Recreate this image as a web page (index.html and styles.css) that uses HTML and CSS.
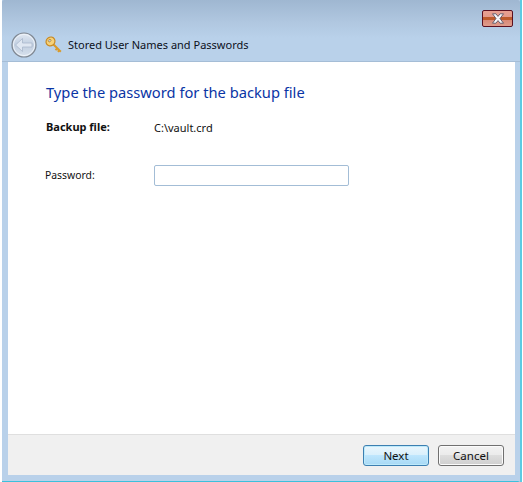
FILE: index.html
```html
<!DOCTYPE html>
<html lang="en">
<head>
<meta charset="utf-8">
<title>Stored User Names and Passwords</title>
<link rel="stylesheet" href="styles.css">
</head>
<body>
<div class="window">
  <div class="chrome">
    <div class="caption">
      <button class="close" aria-label="Close">
        <svg width="14" height="11" viewBox="0 0 14 11"><path d="M1.500 .8h3.400L7 3.400 9.100 .8h3.400L9 5.500l3.500 4.700H9.100L7 7.600 4.900 10.200H1.500L5 5.500z" fill="#f6f6fa" stroke="#4a4a5e" stroke-width=".8"/></svg>
      </button>
    </div>
    <div class="nav">
      <svg class="back" width="26" height="26" viewBox="0 0 26 26">
        <defs>
          <linearGradient id="bk" x1="0" y1="0" x2="0" y2="1"><stop offset="0" stop-color="#e2e9f3"/><stop offset=".5" stop-color="#c0cee0"/><stop offset="1" stop-color="#d9e2ed"/></linearGradient>
        </defs>
        <circle cx="13" cy="13" r="12" fill="url(#bk)" stroke="#7f8791" stroke-width="1.200"/>
        <circle cx="13" cy="13" r="10.600" fill="none" stroke="#eef3f9" stroke-width="1"/>
        <path d="M4.500 13l7-6.500V11h9.500v4H11.500v4.500z" fill="#dfe7f2" stroke="#a9b8cb" stroke-width=".8"/>
      </svg>
      <svg class="key" width="18" height="18" viewBox="0 0 18 18">
        <path d="M7.500 7.500l8.300 8.300M12.300 12.300l-1.800 1.800M14.300 14.300l-1.500 1.500" fill="none" stroke="#d99a2b" stroke-width="2"/>
        <ellipse cx="5.500" cy="5.500" rx="4.600" ry="4.200" transform="rotate(-35 5.500 5.500)" fill="#f6d27a" stroke="#c98a22" stroke-width="1.200"/>
        <ellipse cx="4.600" cy="4.600" rx="1.500" ry="1.200" transform="rotate(-35 4.600 4.600)" fill="#b9cbe3" stroke="#b8801f" stroke-width=".7"/>
      </svg>
      <span class="nav-title">Stored User Names and Passwords</span>
    </div>
  </div>
  <div class="client">
    <main class="content">
      <h1 class="heading">Type the password for the backup file</h1>
      <div class="row row-file">
        <strong class="label label-bold">Backup file:</strong>
        <span class="value">C:\vault.crd</span>
      </div>
      <div class="row row-pass">
        <label class="label label-pass" for="pw">Password:</label>
        <input id="pw" class="input" type="password">
      </div>
    </main>
    <footer class="footer">
      <button class="btn btn-default">Next</button>
      <button class="btn">Cancel</button>
    </footer>
  </div>
</div>
</body>
</html>
```
FILE: styles.css
```css
* { box-sizing: border-box; }
html, body { margin: 0; padding: 0; }
body {
  width: 523px;
  height: 482px;
  background: #fff;
  font-family: "Noto Sans", "Open Sans", sans-serif;
  font-size: 12px;
  color: #111;
  overflow: hidden;
}
.window {
  width: 518px;
  height: 482px;
  margin-left: 2px;
  background: #b9d1ea;
  border-right: 2px solid #b9d1ea;
  border-bottom: 1px solid #3cc0dc;
  box-shadow: 2px 0 0 #5ccae2;
  display: flex;
  flex-direction: column;
  padding: 0 3px 6px 6px;
}
.chrome {
  height: 62px;
  margin: 0 -5px 0 -6px;
  padding: 0 7px 0 8px;
  background: linear-gradient(#9fb7d1 0, #b0c7e0 22px, #b9d1ea 38px);
  border-bottom: 1px solid #a5bdd6;
  border-radius: 2px 2px 0 0;
  flex: none;
}
.caption {
  height: 30px;
  display: flex;
  justify-content: flex-end;
  align-items: flex-start;
  padding-top: 10px;
}
.close {
  width: 31px;
  height: 17px;
  padding: 0;
  border: 1px solid #5b1020;
  border-radius: 2px;
  background: linear-gradient(#e8a092 0, #e39a8a 42%, #bd5a2c 43%, #bd5a2c 62%, #d98a78 63%, #e09c8c 100%);
  display: flex;
  align-items: center;
  justify-content: center;
}
.nav {
  display: flex;
  align-items: center;
  height: 26px;
  margin-top: 2px;
}
.back { flex: none; margin-left: 1px; }
.key { flex: none; margin-left: 8px; }
.nav-title { margin-left: 5px; padding-bottom: 2px; font-size: 11px; color: #0c1020; white-space: nowrap; }
.client {
  flex: 1;
  display: flex;
  flex-direction: column;
  background: #fff;
  min-height: 0;
}
.content { flex: 1; padding: 19px 0 0 38px; }
.heading {
  margin: 0;
  font-size: 14.700px;
  line-height: 22px;
  font-weight: 400;
  color: #0a35a5;
}
.row { display: flex; align-items: center; }
.row-file { margin-top: 16px; height: 16px; }
.row-pass { margin-top: 30px; height: 21px; }
.label { width: 108px; flex: none; font-size: 11px; }
.label-bold { font-weight: 700; padding-bottom: 1px; }
.label-pass { font-size: 10.400px; margin-left: -1px; width: 109px; padding-bottom: 2px; }
.value { font-size: 11px; padding-top: 1px; }
.input {
  width: 195px;
  height: 21px;
  border: 1px solid #a3bdd6;
  border-radius: 2px;
  background: #fff;
  padding: 0;
}
.footer {
  flex: none;
  height: 41px;
  background: #f0f0f0;
  border-top: 1px solid #dfdfdf;
  display: flex;
  justify-content: flex-end;
  align-items: flex-start;
  gap: 9px;
  padding: 10px 11px 0 0;
}
.btn {
  width: 66px;
  height: 21px;
  padding: 0;
  font-family: inherit;
  font-size: 11.500px;
  color: #111;
  border: 1px solid #707070;
  border-radius: 3px;
  background: linear-gradient(#f2f2f2 0, #ebebeb 48%, #dddddd 50%, #cfcfcf 100%);
  box-shadow: inset 0 0 0 1px #fbfbfb;
}
.btn-default {
  border-color: #3c7fb1;
  background: linear-gradient(#eaf6fd 0, #d9f0fc 48%, #bee6fd 50%, #a7d9f5 100%);
  box-shadow: inset 0 0 0 1px #bdeafb;
}
```
